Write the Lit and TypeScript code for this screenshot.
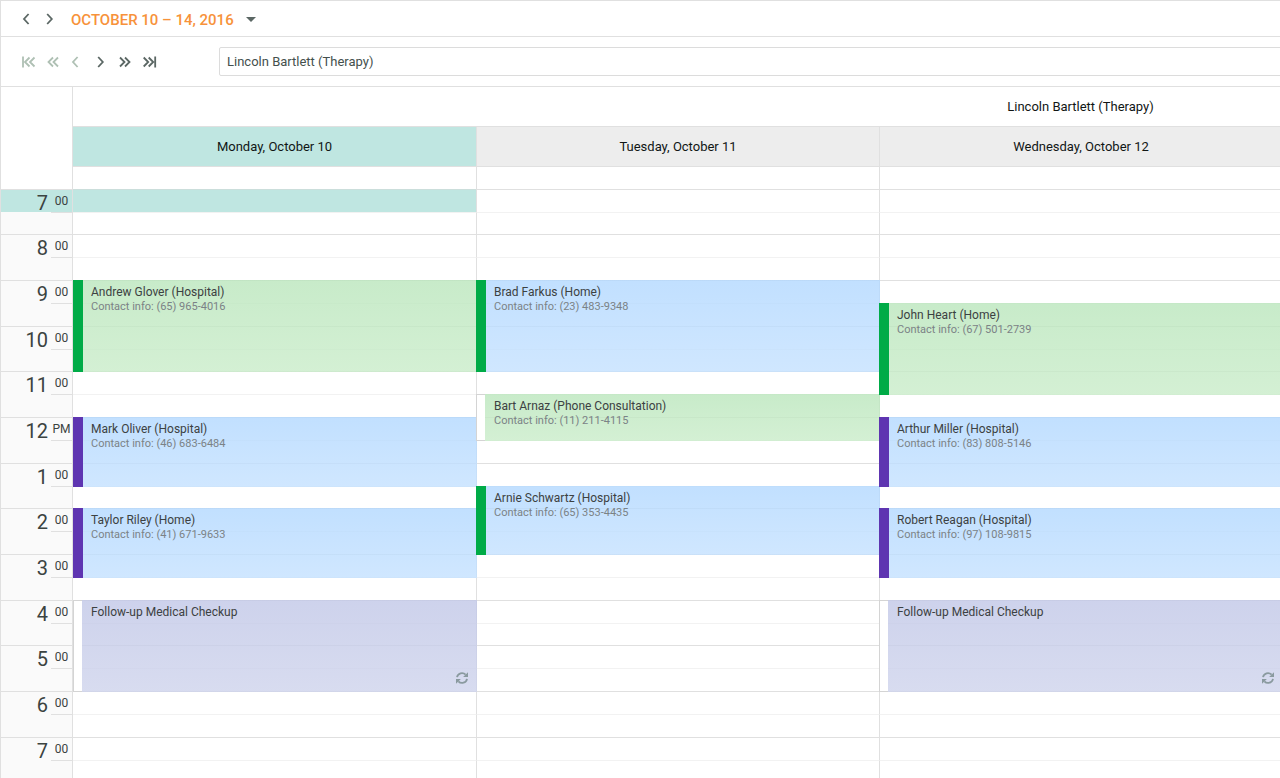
import { LitElement, html, css, svg } from "lit";
import { customElement, property, state } from "lit/decorators.js";
import { classMap } from "lit/directives/class-map.js";
import { styleMap } from "lit/directives/style-map.js";

interface Visit {
  day: number;
  from: number;
  to: number;
  title: string;
  contact?: string;
  tone: "green" | "blue" | "indigo";
  status: "done" | "booked" | "free";
  repeats?: boolean;
}

const DAYS = [
  "Monday, October 10",
  "Tuesday, October 11",
  "Wednesday, October 12",
  "Thursday, October 13",
  "Friday, October 14",
];

const FIRST_HOUR = 7;
const HOURS = Array.from({ length: 13 }, (_, i) => FIRST_HOUR + i);

const VISITS: Visit[] = [
  { day: 0, from: 9, to: 11, title: "Andrew Glover (Hospital)", contact: "(65) 965-4016", tone: "green", status: "done" },
  { day: 0, from: 12, to: 13.5, title: "Mark Oliver (Hospital)", contact: "(46) 683-6484", tone: "blue", status: "booked" },
  { day: 0, from: 14, to: 15.5, title: "Taylor Riley (Home)", contact: "(41) 671-9633", tone: "blue", status: "booked" },
  { day: 0, from: 16, to: 18, title: "Follow-up Medical Checkup", tone: "indigo", status: "free", repeats: true },
  { day: 1, from: 9, to: 11, title: "Brad Farkus (Home)", contact: "(23) 483-9348", tone: "blue", status: "done" },
  { day: 1, from: 11.5, to: 12.5, title: "Bart Arnaz (Phone Consultation)", contact: "(11) 211-4115", tone: "green", status: "free" },
  { day: 1, from: 13.5, to: 15, title: "Arnie Schwartz (Hospital)", contact: "(65) 353-4435", tone: "blue", status: "done" },
  { day: 2, from: 9.5, to: 11.5, title: "John Heart (Home)", contact: "(67) 501-2739", tone: "green", status: "done" },
  { day: 2, from: 12, to: 13.5, title: "Arthur Miller (Hospital)", contact: "(83) 808-5146", tone: "blue", status: "booked" },
  { day: 2, from: 14, to: 15.5, title: "Robert Reagan (Hospital)", contact: "(97) 108-9815", tone: "blue", status: "booked" },
  { day: 2, from: 16, to: 18, title: "Follow-up Medical Checkup", tone: "indigo", status: "free", repeats: true },
];

/* Row 1 holds the half hour before the first full hour. */
const rowOf = (hour: number) => (hour - FIRST_HOUR) * 2 + 2;

const ICONS = {
  first: svg`<path d="M2 1.5v11M8.5 2.5 4 7 8.5 11.5M13.5 2.5 9 7 13.5 11.5"/>`,
  back: svg`<path d="M8 2.5 3.5 7 8 11.5M13 2.5 8.5 7 13 11.5"/>`,
  prev: svg`<path d="M8.6 2 4 7 8.6 12"/>`,
  next: svg`<path d="M5.2 2 9.8 7 5.2 12"/>`,
  forward: svg`<path d="M3 2.5 7.5 7 3 11.5M8 2.5 12.5 7 8 11.5"/>`,
  last: svg`<path d="M2.7 2.5 7.2 7 2.7 11.5M7.7 2.5 12.2 7 7.7 11.5M14.2 1.5v11"/>`,
};

@customElement("nav-button")
export class NavButton extends LitElement {
  @property() icon: keyof typeof ICONS = "next";
  @property() label = "";
  @property({ type: Boolean }) disabled = false;

  static styles = css`
    :host { display: block; }
    .button {
      display: block;
      width: 14px;
      height: 14px;
      padding: 0;
      border: 0;
      background: none;
      color: #5b6764;
      cursor: pointer;
    }
    .button:disabled { color: #afc0b4; cursor: default; }
    .glyph {
      display: block;
      width: 14px;
      height: 14px;
      overflow: visible;
      fill: none;
      stroke: currentColor;
      stroke-width: 1.8;
    }
  `;

  render() {
    return html`<button class="button" type="button" aria-label=${this.label} ?disabled=${this.disabled}>
      <svg class="glyph" viewBox="0 0 14 14" aria-hidden="true">${ICONS[this.icon]}</svg>
    </button>`;
  }
}

@customElement("visit-card")
export class VisitCard extends LitElement {
  @property({ attribute: false }) visit!: Visit;

  static styles = css`
    :host { display: block; min-width: 0; }
    .card { display: flex; height: 100%; }
    .status { flex: none; box-sizing: border-box; width: 10px; }
    .status.done { background: #00ab47; }
    .status.booked { background: #5e35b1; }
    .status.free { width: 9px; background: #fff; border: 1px solid #d4d4d4; border-right: 0; }
    .body { flex: 1; min-width: 0; padding: 4px 8px; position: relative; }
    .status.free + .body { padding-left: 9px; }
    .green { background: linear-gradient(rgba(186, 230, 188, 0.8), rgba(201, 236, 201, 0.8)); }
    .blue { background: linear-gradient(rgba(178, 216, 255, 0.8), rgba(196, 225, 255, 0.8)); }
    .indigo { background: linear-gradient(rgba(193, 199, 231, 0.8), rgba(206, 211, 236, 0.8)); }
    .title { margin: 0; font-size: 12px; line-height: 16px; font-weight: 400; color: #3c4142; }
    .contact { margin: 0; font-size: 11px; line-height: 14px; color: #7b8286; }
    .repeat { position: absolute; right: 9px; bottom: 8px; width: 12px; height: 12px; color: #8a9a9f; }
  `;

  render() {
    const v = this.visit;
    return html`<article class="card">
      <span class="status ${v.status}"></span>
      <div class="body ${v.tone}">
        <h3 class="title">${v.title}</h3>
        ${v.contact ? html`<p class="contact">Contact info: ${v.contact}</p>` : null}
        ${v.repeats
          ? html`<svg class="repeat" viewBox="0 0 12 12" role="img" aria-label="Repeats">
              <g fill="none" stroke="currentColor" stroke-width="1.8">
                <path d="M1 5.2A5 5 0 0 1 9.6 2.7" />
                <path d="M11 6.8A5 5 0 0 1 2.4 9.3" />
              </g>
              <path fill="currentColor" d="M12 .2v4.9H7.1zM0 11.8V6.9h4.9z" />
            </svg>`
          : null}
      </div>
    </article>`;
  }
}

@customElement("app-root")
export class AppRoot extends LitElement {
  @state() private today = 0;
  @state() private currentHour = 7;

  static styles = css`
    :host {
      display: block;
      height: 100vh;
      overflow: auto;
      scrollbar-width: none;
      background: #fff;
      color: #111615;
      font-family: Roboto, sans-serif;
      font-size: 13px;
      --line: #e0e0e0;
      --soft-line: #f2f2f2;
      --accent: #bfe6e1;
    }
    .scheduler {
      width: max-content;
      min-width: 100%;
      box-sizing: border-box;
      border: 1px solid var(--line);
    }
    .period {
      display: flex;
      align-items: center;
      height: 35px;
      padding-left: 19px;
      border-bottom: 1px solid var(--line);
    }
    .arrows { display: flex; gap: 8px; margin-right: 15px; }
    .range {
      display: flex;
      align-items: center;
      gap: 12px;
      padding: 2px 0 0;
      border: 0;
      background: none;
      color: #f7923a;
      font: 500 15px/18px Roboto, sans-serif;
      cursor: pointer;
    }
    .caret { width: 10px; height: 5px; fill: #5b6764; }
    .resources {
      display: flex;
      align-items: center;
      height: 49px;
      padding: 0 20px;
      border-bottom: 1px solid var(--line);
    }
    .pager { display: flex; gap: 10px; margin-right: 64px; }
    .resource {
      flex: 1;
      height: 29px;
      padding: 0 7px;
      border: 1px solid #dcdcdc;
      border-radius: 2px;
      appearance: none;
      background: #fff;
      color: #44504d;
      font: 400 13px/27px Roboto, sans-serif;
    }
    .board { display: grid; grid-template-columns: 72px 1fr; }
    .corner { border-right: 1px solid var(--line); }
    .owner {
      display: flex;
      align-items: center;
      justify-content: center;
      height: 39px;
      border-bottom: 1px solid var(--line);
      font-size: 13px;
      font-weight: 400;
    }
    .days, .slots { display: grid; grid-template-columns: repeat(5, minmax(403px, 1fr)); }
    .day {
      display: flex;
      align-items: center;
      justify-content: center;
      height: 39px;
      margin: 0;
      border-bottom: 1px solid var(--line);
      background: #ededed;
      font-size: 13px;
      font-weight: 400;
    }
    .day + .day { border-left: 1px solid var(--line); }
    .day.today { background: var(--accent); }
    .ruler, .slots { grid-template-rows: 22px repeat(5, 23px 22px 23px 23px 23px 23px); }
    .ruler { display: grid; grid-template-columns: 50px 1fr; border-right: 1px solid var(--line); background: #fafafa; }
    .before { grid-area: 1 / 1 / auto / -1; background: #fff; }
    .now { grid-column: 1 / -1; background: var(--accent); }
    .hour, .minute { border-top: 1px solid var(--line); color: #3b4341; }
    .hour { grid-column: 1; grid-row-end: span 2; padding-right: 3px; font-size: 20px; line-height: 26px; text-align: right; }
    .minute { grid-column: 2; font-size: 12px; line-height: 22px; text-align: center; white-space: nowrap; }
    .half { grid-column: 2; border-top: 1px solid var(--line); }
    .slot { border-top: 1px solid var(--line); }
    .slot.thirty { border-top-color: var(--soft-line); }
    .slot.opening { border-top: 0; }
    .slot.later { border-left: 1px solid var(--line); }
    .slot.current { background: var(--accent); border-top-color: #cbdedb; }
    .visit { z-index: 1; margin: 0 -1px -1px 0; }
  `;

  private renderSlots() {
    const rows = Array.from({ length: HOURS.length * 2 + 1 }, (_, i) => i + 1);
    return DAYS.map((_, day) =>
      rows.map((row) => html`<div
        class=${classMap({
          slot: true,
          opening: row === 1,
          thirty: row % 2 === 1 && row > 1,
          later: day > 0,
          current: day === this.today && row === rowOf(this.currentHour),
        })}
        style=${styleMap({ gridArea: `${row} / ${day + 1}` })}
      ></div>`),
    );
  }

  private renderRuler() {
    return HOURS.map((h) => {
      const row = rowOf(h);
      return html`
        ${h === this.currentHour ? html`<div class="now" style=${styleMap({ gridRow: `${row}` })}></div>` : null}
        <div class="hour" style=${styleMap({ gridRowStart: `${row}` })}>${h > 12 ? h - 12 : h}</div>
        <div class="minute" style=${styleMap({ gridRowStart: `${row}` })}>${h === 12 ? "PM" : "00"}</div>
        <div class="half" style=${styleMap({ gridRowStart: `${row + 1}` })}></div>
      `;
    });
  }

  render() {
    return html`<main class="scheduler">
      <header class="period">
        <nav class="arrows" aria-label="Week">
          <nav-button icon="prev" label="Previous week"></nav-button>
          <nav-button icon="next" label="Next week"></nav-button>
        </nav>
        <button class="range" type="button">
          OCTOBER 10 – 14, 2016
          <svg class="caret" viewBox="0 0 10 5" aria-hidden="true"><path d="M0 0h10L5 5z" /></svg>
        </button>
      </header>
      <div class="resources">
        <nav class="pager" aria-label="Resources">
          <nav-button icon="first" label="First" disabled></nav-button>
          <nav-button icon="back" label="Page back" disabled></nav-button>
          <nav-button icon="prev" label="Previous" disabled></nav-button>
          <nav-button icon="next" label="Next"></nav-button>
          <nav-button icon="forward" label="Page forward"></nav-button>
          <nav-button icon="last" label="Last"></nav-button>
        </nav>
        <select class="resource" aria-label="Resource">
          <option>Lincoln Bartlett (Therapy)</option>
        </select>
      </div>
      <section class="board">
        <div class="corner"></div>
        <div>
          <div class="owner">Lincoln Bartlett (Therapy)</div>
          <div class="days">
            ${DAYS.map((d, i) => html`<h2 class=${classMap({ day: true, today: i === this.today })}>${d}</h2>`)}
          </div>
        </div>
        <div class="ruler">
          <div class="before"></div>
          ${this.renderRuler()}
        </div>
        <div class="slots">
          ${this.renderSlots()}
          ${VISITS.map((v) => html`<visit-card
            class="visit"
            .visit=${v}
            style=${styleMap({ gridArea: `${rowOf(v.from)} / ${v.day + 1} / ${rowOf(v.to)} / auto` })}
          ></visit-card>`)}
        </div>
      </section>
    </main>`;
  }
}
